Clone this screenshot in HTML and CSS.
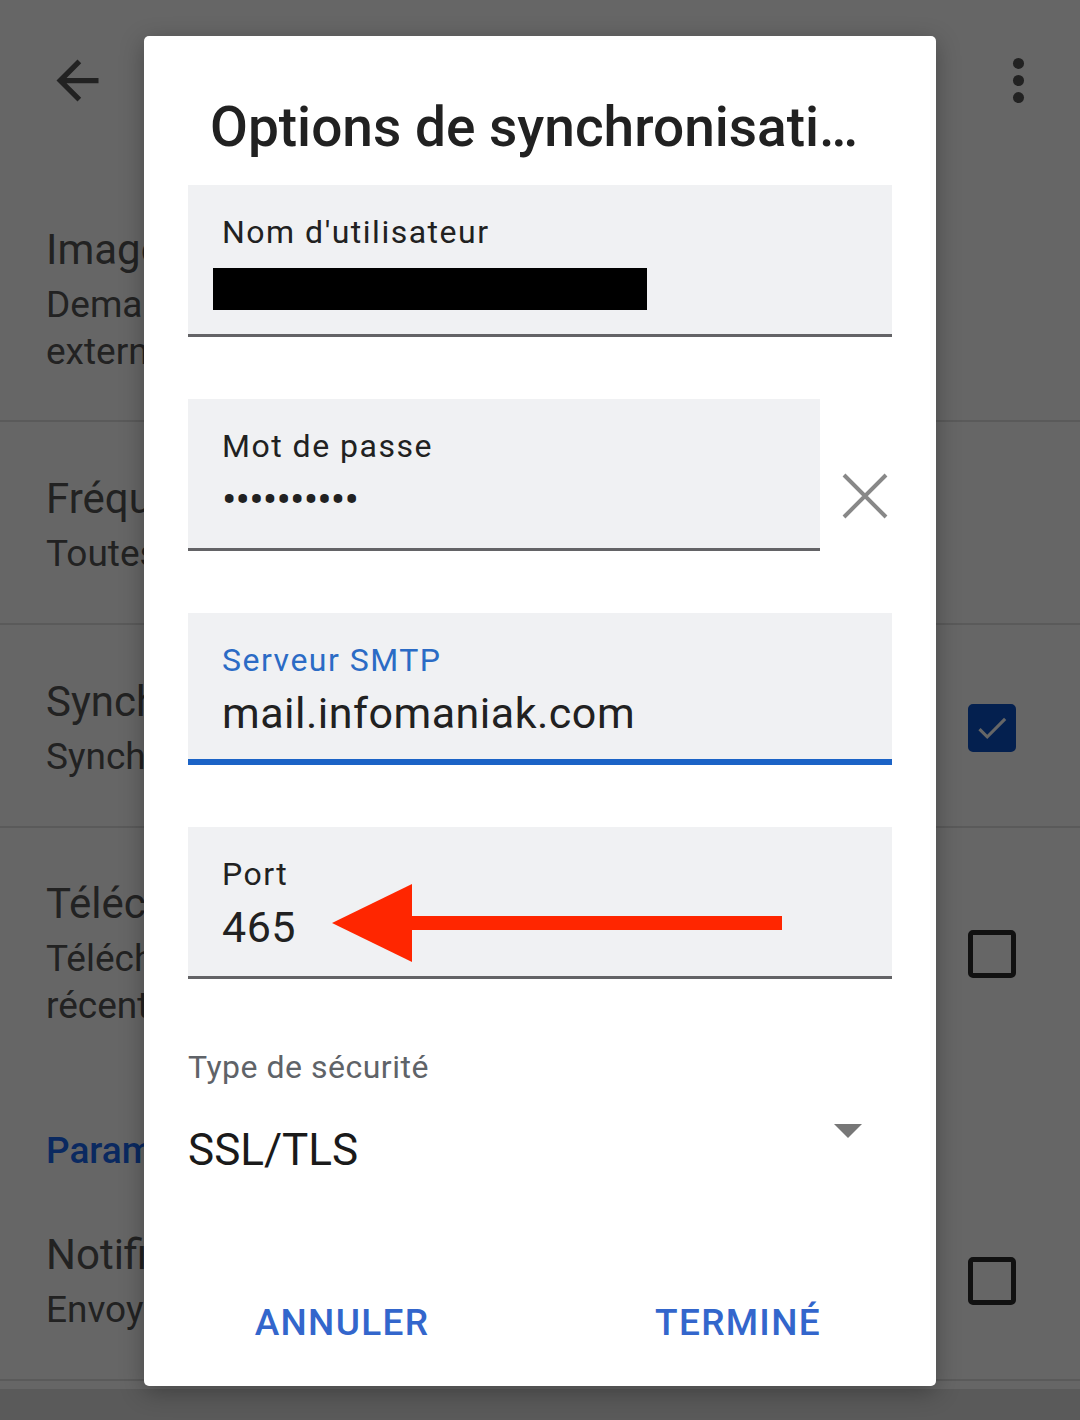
FILE: index.html
```html
<!DOCTYPE html>
<html lang="fr">
<head>
    <meta charset="UTF-8">
    <meta name="viewport" content="width=device-width, initial-scale=1.0">
    <title>Options de synchronisation</title>
    <link rel="stylesheet" href="styles.css">
</head>
<body>
    <div class="settings">
        <header class="toolbar">
            <svg class="toolbar-icon" viewBox="0 0 24 24"><path d="M20 11H7.83l5.59-5.59L12 4l-8 8 8 8 1.41-1.41L7.83 13H20v-2z"/></svg>
            <svg class="toolbar-icon" viewBox="0 0 24 24"><circle cx="12" cy="5.5" r="2.1"/><circle cx="12" cy="12" r="2.1"/><circle cx="12" cy="18.5" r="2.1"/></svg>
        </header>

        <div class="pref">
            <div class="pref-text">
                <div class="pref-title">Images</div>
                <div class="pref-summary">Demander avant d'afficher les images des messages<br>externes</div>
            </div>
        </div>
        <div class="pref">
            <div class="pref-text">
                <div class="pref-title">Fréquence de synchronisation</div>
                <div class="pref-summary">Toutes les 15 minutes</div>
            </div>
        </div>
        <div class="pref">
            <div class="pref-text">
                <div class="pref-title">Synchroniser les e-mails</div>
                <div class="pref-summary">Synchroniser les e-mails de ce compte</div>
            </div>
            <span class="checkbox checked">
                <svg viewBox="0 0 24 24"><path d="M9 16.2L4.8 12l-1.4 1.4L9 19 21 7l-1.4-1.4L9 16.2z"/></svg>
            </span>
        </div>
        <div class="pref last-in-group">
            <div class="pref-text">
                <div class="pref-title">Télécharger les pièces jointes</div>
                <div class="pref-summary">Télécharger automatiquement les pièces jointes<br>récentes via le Wi-Fi</div>
            </div>
            <span class="checkbox"></span>
        </div>
        <div class="pref-category">Paramètres de notification</div>
        <div class="pref">
            <div class="pref-text">
                <div class="pref-title">Notifications</div>
                <div class="pref-summary">Envoyer une notification à l'arrivée d'un e-mail</div>
            </div>
            <span class="checkbox"></span>
        </div>
        <div class="pref-more"></div>
    </div>

    <div class="scrim"></div>

    <div class="dialog">
        <h1 class="dialog-title">Options de synchronisati…</h1>

        <div class="field">
            <label>Nom d'utilisateur</label>
            <div class="field-value"><span class="redacted"></span></div>
        </div>

        <div class="field-row">
            <div class="field">
                <label>Mot de passe</label>
                <div class="field-value password">••••••••••</div>
            </div>
            <svg class="clear-icon" viewBox="0 0 48 48"><path d="M3 3L45 45M45 3L3 45"/></svg>
        </div>

        <div class="field focused">
            <label>Serveur SMTP</label>
            <div class="field-value">mail.infomaniak.com</div>
        </div>

        <div class="field">
            <label>Port</label>
            <div class="field-value">465</div>
            <svg class="annotation" viewBox="0 0 450 80"><polygon points="0,40 80,1 80,79"/><rect x="78" y="33" width="372" height="14"/></svg>
        </div>

        <div class="select">
            <div class="select-label">Type de sécurité</div>
            <div class="select-value">
                <span>SSL/TLS</span>
                <svg class="select-arrow" viewBox="0 0 28 14"><polygon points="0,0 28,0 14,14"/></svg>
            </div>
        </div>

        <div class="dialog-actions">
            <button type="button">Annuler</button>
            <button type="button">Terminé</button>
        </div>
    </div>
</body>
</html>
```

FILE: styles.css
```css
body {
    margin: 0;
    width: 1080px;
    height: 1420px;
    overflow: hidden;
    background-color: #fff;
    font-family: Roboto, "Noto Sans", sans-serif;
    position: relative;
}

/* settings page behind the dialog */
.settings {
    color: #555;
}

.toolbar {
    height: 174px;
    display: flex;
    justify-content: space-between;
    padding: 0 30px 14px 46px;
    box-sizing: border-box;
    align-items: center;
}

.toolbar-icon {
    width: 63px;
    height: 63px;
    fill: #555;
}

.pref {
    display: flex;
    align-items: center;
    box-sizing: border-box;
    min-height: 203px;
    padding: 50px 64px 45px 46px;
    border-bottom: 2px solid #e2e2e2;
}

.pref-text {
    flex: 1;
}

.pref-title {
    font-size: 42px;
    line-height: 52px;
}

.pref-summary {
    font-size: 37px;
    line-height: 47px;
    margin-top: 5px;
}

.pref.last-in-group {
    border-bottom: none;
}

.pref-category {
    padding: 53px 46px 3px;
    font-size: 37px;
    line-height: 48px;
    font-weight: 500;
    color: #1b67f0;
}

.checkbox {
    width: 38px;
    height: 38px;
    border: 5px solid #2b2b2b;
    border-radius: 5px;
}

.checkbox.checked {
    border-color: #0b51c6;
    background-color: #0b51c6;
}

.checkbox svg {
    display: block;
    width: 38px;
    height: 38px;
    fill: #fff;
}

.pref-more {
    height: 60px;
    background-color: #e2e2e2;
    margin-top: 8px;
}

.scrim {
    position: absolute;
    inset: 0;
    background-color: rgba(0, 0, 0, 0.6);
}

/* dialog */
.dialog {
    position: absolute;
    left: 144px;
    top: 36px;
    width: 792px;
    height: 1350px;
    box-sizing: border-box;
    padding: 0 44px;
    background-color: #fff;
    border-radius: 5px;
    box-shadow: 0 6px 24px rgba(0, 0, 0, 0.3);
    display: flex;
    flex-direction: column;
}

.dialog-title {
    margin: 60px 0 27px 22px;
    font-size: 55px;
    line-height: 62px;
    font-weight: 500;
    color: #212121;
    white-space: nowrap;
    overflow: hidden;
}

.field {
    position: relative;
    height: 152px;
    box-sizing: border-box;
    padding: 27px 34px 0;
    background-color: #f0f1f3;
    border-bottom: 3px solid #636366;
    margin-bottom: 62px;
}

.field label {
    display: block;
    font-size: 32px;
    line-height: 40px;
    letter-spacing: 1.5px;
    color: #212121;
}

.field-value {
    font-size: 43px;
    line-height: 56px;
    margin-top: 5px;
    color: #212121;
    letter-spacing: 0.5px;
}

.field-value.password {
    letter-spacing: -0.9px;
}

.field.focused {
    border-bottom: 6px solid #1b63c6;
}

.field.focused label {
    color: #2b6bc5;
}

.redacted {
    display: inline-block;
    width: 434px;
    height: 42px;
    margin: 11px 0 0 -9px;
    background-color: #000;
    vertical-align: top;
}

.field-row {
    display: flex;
    align-items: center;
}

.field-row .field {
    width: 632px;
}

.clear-icon {
    width: 48px;
    height: 48px;
    margin: 0 0 20px 21px;
    stroke: #888;
    stroke-width: 4;
}

.annotation {
    position: absolute;
    left: 144px;
    top: 56px;
    width: 450px;
    height: 80px;
    fill: #ff2600;
}

.select-label {
    font-size: 32px;
    line-height: 40px;
    letter-spacing: 0.5px;
    color: #5f6368;
    margin-top: 6px;
}

.select-value {
    display: flex;
    justify-content: space-between;
    align-items: center;
    font-size: 44px;
    line-height: 56px;
    color: #1a1a1a;
    margin-top: 35px;
}

.select-arrow {
    width: 28px;
    height: 14px;
    fill: #777;
    margin: -38px 30px 0 0;
}

.dialog-actions {
    margin: auto -44px 38px;
    display: flex;
}

.dialog-actions button {
    flex: 1;
    border: none;
    background: none;
    padding: 0;
    font-family: Roboto, sans-serif;
    font-size: 37px;
    line-height: 50px;
    font-weight: 500;
    text-transform: uppercase;
    color: #3366cc;
    letter-spacing: 1.3px;
}
```
